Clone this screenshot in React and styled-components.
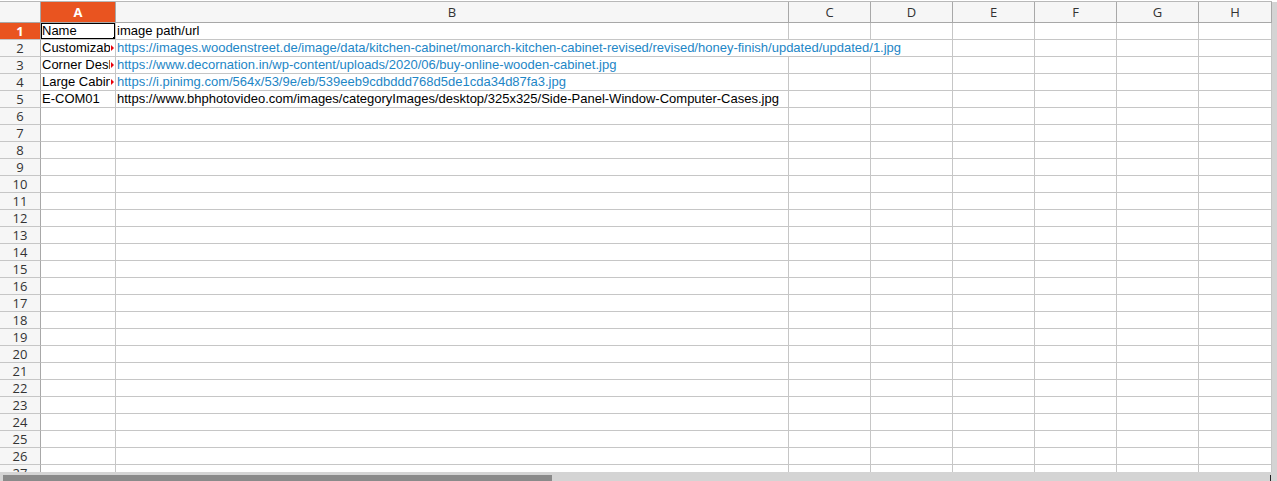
import React from "react";
import styled, { createGlobalStyle, css } from "styled-components";

const Global = createGlobalStyle`
  html, body { margin: 0; padding: 0; background: #fff; }
  body { font-family: "Liberation Sans", Arial, sans-serif; }
`;

const COLS = "41px 75px 673px 82px 82px 82px 82px 82px 73px";
const LETTERS = ["A", "B", "C", "D", "E", "F", "G", "H"];

const Frame = styled.div`
  width: 1277px;
  height: 481px;
  overflow: hidden;
  display: grid;
  grid-template-rows: 472px 9px;
  background: #fff;
`;

const Main = styled.div`
  display: grid;
  grid-template-columns: 1272px 5px;
  overflow: hidden;
`;

const Sheet = styled.div`
  overflow: hidden;
  padding-top: 1px;
`;

const Row = styled.div`
  display: grid;
  grid-template-columns: ${COLS};
  height: ${(p) => (p.$header ? "22px" : "17px")};
  box-sizing: border-box;
  ${(p) =>
    p.$header &&
    css`
      border-top: 1px solid #b8b8b8;
    `}
`;

const ColHead = styled.div`
  box-sizing: border-box;
  border-right: 1px solid #a8a8a8;
  border-bottom: 1px solid #a8a8a8;
  background: ${(p) => (p.$active ? "#e95420" : "#f6f6f6")};
  color: ${(p) => (p.$active ? "#fff" : "#333")};
  font-family: "Open Sans", "Noto Sans", sans-serif;
  font-size: 13px;
  font-weight: ${(p) => (p.$active ? 700 : 400)};
  display: flex;
  align-items: center;
  justify-content: center;
  line-height: 1;
`;

const RowHead = styled.div`
  box-sizing: border-box;
  border-right: 1px solid #a8a8a8;
  border-bottom: 1px solid #c6c6c6;
  background: ${(p) => (p.$active ? "#e95420" : "#f6f6f6")};
  color: ${(p) => (p.$active ? "#fff" : "#333")};
  font-family: "Open Sans", "Noto Sans", sans-serif;
  font-size: 13px;
  font-weight: ${(p) => (p.$active ? 700 : 400)};
  display: flex;
  align-items: center;
  justify-content: center;
  line-height: 1;
`;

const Cell = styled.div`
  position: relative;
  box-sizing: border-box;
  border-right: 1px solid #c6c6c6;
  border-bottom: 1px solid #c6c6c6;
  font-size: 13px;
  line-height: 16px;
  color: #000;
  white-space: nowrap;
  overflow: ${(p) => (p.$spill ? "visible" : "hidden")};
  padding-left: 1px;
`;

const Text = styled.span`
  display: inline-block;
  color: ${(p) => (p.$link ? "#1d86c6" : "#000")};
  ${(p) =>
    p.$spill &&
    css`
      position: relative;
      z-index: 1;
      background: #fff;
      padding-right: 2px;
    `}
`;

const Clip = styled.span`
  display: block;
  width: 68px;
  overflow: hidden;
`;

const Selection = styled.div`
  position: absolute;
  left: -1px;
  top: -1px;
  right: -1px;
  bottom: -1px;
  border: 2px solid #000;
  pointer-events: none;
  z-index: 2;
`;

const Handle = styled.div`
  position: absolute;
  right: -3px;
  bottom: -3px;
  width: 5px;
  height: 5px;
  background: #000;
  z-index: 3;
`;

const Overflow = styled.div`
  position: absolute;
  right: 1px;
  top: 5px;
  width: 0;
  height: 0;
  z-index: 2;
  border-top: 3px solid transparent;
  border-bottom: 3px solid transparent;
  border-left: 3px solid #e8000b;
`;

const VScroll = styled.div`
  background: #d4d4d4;
  margin-top: 2px;
`;

const HScroll = styled.div`
  background: #d4d4d4;
  display: flex;
  align-items: flex-end;
  padding-left: 3px;
  position: relative;
`;

const Thumb = styled.div`
  width: 549px;
  height: 6px;
  background: #8a8a8a;
`;

const Caret = styled.div`
  position: absolute;
  right: 6px;
  bottom: 0;
  width: 1px;
  height: 6px;
  background: #222;
`;

const data = [
  { a: "Name", b: "image path/url", sel: true },
  {
    a: "Customizable Kitchen Cabinet",
    b: "https://images.woodenstreet.de/image/data/kitchen-cabinet/monarch-kitchen-cabinet-revised/revised/honey-finish/updated/updated/1.jpg",
    link: true,
    clipped: true,
  },
  {
    a: "Corner Desk Cabinet",
    b: "https://www.decornation.in/wp-content/uploads/2020/06/buy-online-wooden-cabinet.jpg",
    link: true,
    clipped: true,
  },
  {
    a: "Large Cabinet",
    b: "https://i.pinimg.com/564x/53/9e/eb/539eeb9cdbddd768d5de1cda34d87fa3.jpg",
    link: true,
    clipped: true,
  },
  {
    a: "E-COM01",
    b: "https://www.bhphotovideo.com/images/categoryImages/desktop/325x325/Side-Panel-Window-Computer-Cases.jpg",
  },
];

const ROWS = 27;

export default function App() {
  const rows = [];
  for (let i = 0; i < ROWS; i++) {
    const d = data[i];
    rows.push(
      <Row key={i}>
        <RowHead $active={i === 0}>{i + 1}</RowHead>
        <Cell>
          {d && d.clipped ? (
            <>
              <Clip>{d.a}</Clip>
              <Overflow />
            </>
          ) : (
            d && d.a
          )}
          {d && d.sel && (
            <>
              <Selection />
              <Handle />
            </>
          )}
        </Cell>
        <Cell $spill={!!d}>
          {d && (
            <Text $link={d.link} $spill>
              {d.b}
            </Text>
          )}
        </Cell>
        {LETTERS.slice(2).map((l) => (
          <Cell key={l} />
        ))}
      </Row>
    );
  }

  return (
    <>
      <Global />
      <Frame>
        <Main>
          <Sheet>
            <Row $header>
              <ColHead />
              {LETTERS.map((l) => (
                <ColHead key={l} $active={l === "A"}>
                  {l}
                </ColHead>
              ))}
            </Row>
            {rows}
          </Sheet>
          <VScroll />
        </Main>
        <HScroll>
          <Thumb />
          <Caret />
        </HScroll>
      </Frame>
    </>
  );
}
